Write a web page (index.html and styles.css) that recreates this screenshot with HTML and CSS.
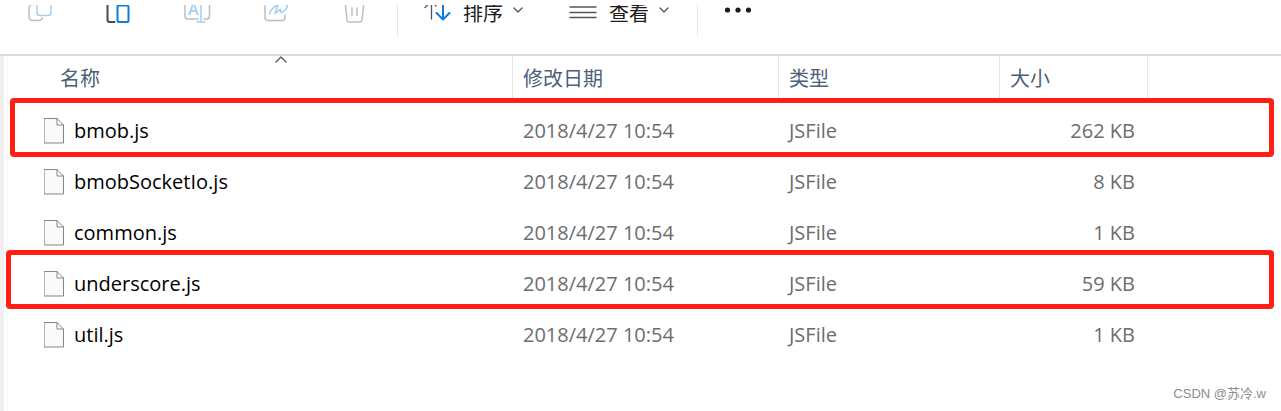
FILE: index.html
```html
<!doctype html>
<html lang="zh-CN">
<head>
	<meta charset="UTF-8">
	<meta name="viewport" content="width=device-width, initial-scale=1.0">
	<title>文件</title>
	<link rel="stylesheet" href="styles.css">
</head>
<body>

	<div class="toolbar">
		<div class="tools">
			<button class="tool" aria-label="复制">
				<svg width="28" height="28" viewBox="0 0 28 28">
					<path class="grey" d="M8 6.5H6a3 3 0 0 0-3 3V19a3.5 3.5 0 0 0 3.5 3.5H12.500a4.500 4.500 0 0 0 4-2.500"/>
					<rect class="pale" x="11" y="0" width="14" height="17.5" rx="3"/>
				</svg>
			</button>
			<button class="tool" aria-label="粘贴">
				<svg width="28" height="28" viewBox="0 0 28 28">
					<path class="dark" d="M6 2H4.500a2 2 0 0 0-2 2V22a2 2 0 0 0 2 2H9.500"/>
					<rect class="blue" x="12.500" y="7.500" width="11" height="16.500" rx="1.500"/>
				</svg>
			</button>
			<button class="tool" aria-label="重命名">
				<svg width="28" height="28" viewBox="0 0 28 28">
					<path class="grey" d="M14 4H4a3 3 0 0 0-3 3V18a3 3 0 0 0 3 3H14M20 4H22.500a3 3 0 0 1 3 3V18a3 3 0 0 1-3 3H20"/>
					<text class="letter" x="4" y="17">A</text>
					<path class="pale" d="M17 1V24M13 24H21"/>
				</svg>
			</button>
			<button class="tool" aria-label="共享">
				<svg width="28" height="28" viewBox="0 0 28 28">
					<path class="grey" d="M8 4H5a3 3 0 0 0-3 3V19.500a3 3 0 0 0 3 3H19a3 3 0 0 0 3-3V17"/>
					<path class="pale" d="M6.500 16C8 11 11 8.500 15 7L12 15.500L17.500 11L17.500 14.500C20 14 23 12 24.500 8.500L20 4"/>
				</svg>
			</button>
			<button class="tool" aria-label="删除">
				<svg width="28" height="28" viewBox="0 0 28 28">
					<path class="grey" d="M1 4H24M3 4L5 22Q5.300 24 7.500 24H17.500Q19.700 24 20 22L22 4M10 10V17.500M15 10V17.500"/>
				</svg>
			</button>
			<span class="line"></span>
			<button class="menu">
				<svg width="28" height="28" viewBox="0 0 28 28">
					<path class="thin" d="M8.500 21V3M2 9.500L8.500 3L13 8"/>
					<path class="blue" d="M20 4V21M13.500 15L20 21.500L26.500 15"/>
				</svg>
				<span>排序</span>
				<svg class="chevron" width="10" height="6" viewBox="0 0 10 6"><path class="thin" d="M1 1L5 5L9 1"/></svg>
			</button>
			<button class="menu">
				<svg width="28" height="28" viewBox="0 0 28 28">
					<path class="thin" d="M1 9H27M1 14.500H27M1 19.500H27"/>
				</svg>
				<span>查看</span>
				<svg class="chevron" width="10" height="6" viewBox="0 0 10 6"><path class="thin" d="M1 1L5 5L9 1"/></svg>
			</button>
			<span class="line"></span>
			<button class="tool" aria-label="更多">
				<svg width="28" height="28" viewBox="0 0 28 28">
					<g fill="#1b1b1b"><circle cx="3.500" cy="12" r="2.600"/><circle cx="14" cy="12" r="2.600"/><circle cx="24.500" cy="12" r="2.600"/></g>
				</svg>
			</button>
		</div>
	</div>

	<div class="files">
		<svg class="sort-mark" width="12" height="8" viewBox="0 0 12 8"><path class="thin" d="M1 6L6 1L11 6"/></svg>
		<div class="list">
			<table>
				<thead>
					<tr>
						<th class="name">名称</th>
						<th class="date">修改日期</th>
						<th class="type">类型</th>
						<th class="size">大小</th>
						<th></th>
					</tr>
				</thead>
				<tbody>
					<tr>
						<td class="name"><div class="file"><svg width="20" height="26" viewBox="0 0 20 26"><path class="page" d="M.5.5H13L19.500 7V25H.5ZM13 .5V7H19.500"/></svg>bmob.js</div></td>
						<td>2018/4/27 10:54</td>
						<td>JSFile</td>
						<td class="kb">262 KB</td>
						<td></td>
					</tr>
					<tr>
						<td class="name"><div class="file"><svg width="20" height="26" viewBox="0 0 20 26"><path class="page" d="M.5.5H13L19.500 7V25H.5ZM13 .5V7H19.500"/></svg>bmobSocketIo.js</div></td>
						<td>2018/4/27 10:54</td>
						<td>JSFile</td>
						<td class="kb">8 KB</td>
						<td></td>
					</tr>
					<tr>
						<td class="name"><div class="file"><svg width="20" height="26" viewBox="0 0 20 26"><path class="page" d="M.5.5H13L19.500 7V25H.5ZM13 .5V7H19.500"/></svg>common.js</div></td>
						<td>2018/4/27 10:54</td>
						<td>JSFile</td>
						<td class="kb">1 KB</td>
						<td></td>
					</tr>
					<tr>
						<td class="name"><div class="file"><svg width="20" height="26" viewBox="0 0 20 26"><path class="page" d="M.5.5H13L19.500 7V25H.5ZM13 .5V7H19.500"/></svg>underscore.js</div></td>
						<td>2018/4/27 10:54</td>
						<td>JSFile</td>
						<td class="kb">59 KB</td>
						<td></td>
					</tr>
					<tr>
						<td class="name"><div class="file"><svg width="20" height="26" viewBox="0 0 20 26"><path class="page" d="M.5.5H13L19.500 7V25H.5ZM13 .5V7H19.500"/></svg>util.js</div></td>
						<td>2018/4/27 10:54</td>
						<td>JSFile</td>
						<td class="kb">1 KB</td>
						<td></td>
					</tr>
				</tbody>
			</table>
		</div>
		<div class="mark mark-bmob"></div>
		<div class="mark mark-underscore"></div>
		<span class="credit">CSDN @苏冷.w</span>
	</div>

</body>
</html>
```
FILE: styles.css
```css
* {
	box-sizing: border-box;
}

body {
	margin: 0;
	min-height: 100vh;
	display: flex;
	flex-direction: column;
	background: #fff;
	font-family: "Open Sans", "Noto Sans CJK SC", sans-serif;
	font-size: 20px;
	color: #000;
}

svg {
	display: block;
	flex: none;
	fill: none;
	stroke-width: 1.5;
	stroke-linecap: round;
	stroke-linejoin: round;
}

.grey { stroke: #bfbfbf; }
.pale { stroke: #a3cff2; fill: #fff; }
path.pale { fill: none; }
.dark { stroke: #4a4a4a; stroke-width: 2; }
.blue { stroke: #0f7bd8; stroke-width: 2; }
.thin { stroke: #555; stroke-width: 1.3; }
.page { stroke: #858585; stroke-width: 1; fill: #fafafa; stroke-linejoin: miter; }

.letter {
	font-family: "Open Sans", sans-serif;
	font-size: 16px;
	font-weight: 600;
	fill: #a3cff2;
}

.toolbar {
	margin-top: 5px;
	overflow: hidden;
	border-bottom: 2px solid #d9d9d9;
}

.tools {
	display: flex;
	height: 48px;
	margin-top: -17px;
	margin-bottom: 18px;
}

.tools button {
	display: flex;
	align-items: center;
	border: 0;
	padding: 0;
	background: none;
	font: inherit;
	color: #1b1b1b;
}

.tools .tool {
	width: 79px;
	justify-content: center;
}

.tools .menu {
	gap: 12px;
	margin-left: 25px;
}

.tools .menu + .menu {
	margin-left: 46px;
}

.menu .chevron {
	margin-left: -2px;
	margin-bottom: 4px;
}

.line {
	width: 1px;
	margin-left: 2px;
	background: #e5e5e5;
}

.menu + .line {
	margin-left: 28px;
}

/* file list */
.files {
	position: relative;
	display: flex;
	flex: 1;
	border-left: 4px solid #f0f0f0;
	padding-left: 3px;
}

.list {
	flex: 1;
	border-left: 1px solid #f5f5f5;
}

.list table {
	width: 100%;
	table-layout: fixed;
	border-collapse: separate;
	border-spacing: 0;
}

.list th {
	height: 42px;
	padding: 0 10px;
	border-right: 1px solid #e5e5e5;
	font-weight: normal;
	text-align: left;
	color: #4c607a;
}

.list th:last-child {
	border-right: 0;
}

.list th.name {
	width: 505px;
	padding-left: 52px;
}

th.date { width: 266px; }
th.type { width: 221px; }
th.size { width: 148px; }

.list tbody::before {
	content: "";
	display: block;
	height: 7px;
}

.list td {
	height: 51px;
	padding: 0 10px;
	line-height: 28px;
	color: #6d6d6d;
}

.list td.name {
	padding-left: 36px;
	color: #000;
}

.file {
	display: flex;
	align-items: center;
	gap: 10px;
}

.list td.kb {
	padding-right: 13px;
	text-align: right;
}

.sort-mark {
	position: absolute;
	left: 271px;
	top: 0;
}

.mark {
	position: absolute;
	right: 7px;
	height: 59px;
	border: 5px solid #ff1f14;
	border-radius: 4px;
}

.mark-bmob {
	left: 6px;
	top: 42px;
}

.mark-underscore {
	left: 2px;
	top: 194px;
}

.credit {
	position: absolute;
	right: 15px;
	bottom: 8px;
	font-family: "Liberation Sans", "Noto Sans CJK SC", sans-serif;
	font-size: 13px;
	line-height: 18px;
	color: #8c8c8c;
}
```
